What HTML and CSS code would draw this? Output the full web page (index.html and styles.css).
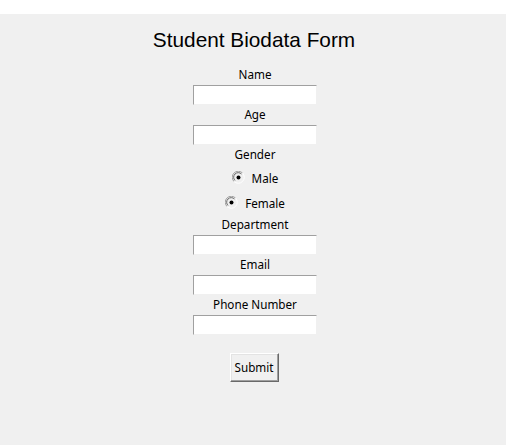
FILE: index.html
```html
<!DOCTYPE html>
<html>
<head>
<meta charset="utf-8">
<link rel="stylesheet" href="styles.css">
</head>
<body>
<div class="topbar"></div>
<div class="form">
  <div class="title">Student Biodata Form</div>
  <div class="label">Name</div>
  <div class="entry"></div>
  <div class="label">Age</div>
  <div class="entry"></div>
  <div class="label">Gender</div>
  <div class="radio male">
    <svg class="ind" width="13" height="13" viewBox="0 0 13 13">
      <path d="M2 10.5 A5.5 5.5 0 0 1 10.5 2" fill="none" stroke="#a0a0a0" stroke-width="1"/>
      <path d="M3 9.5 A4.5 4.5 0 0 1 9.5 3" fill="none" stroke="#696969" stroke-width="1"/>
      <path d="M10.5 2 A5.5 5.5 0 0 1 2 10.5" fill="none" stroke="#ffffff" stroke-width="1"/>
      <circle cx="6.5" cy="6.5" r="2" fill="#000"/>
    </svg>
    <span>Male</span>
  </div>
  <div class="radio female">
    <svg class="ind" width="13" height="13" viewBox="0 0 13 13">
      <path d="M2 10.5 A5.5 5.5 0 0 1 10.5 2" fill="none" stroke="#a0a0a0" stroke-width="1"/>
      <path d="M3 9.5 A4.5 4.5 0 0 1 9.5 3" fill="none" stroke="#696969" stroke-width="1"/>
      <path d="M10.5 2 A5.5 5.5 0 0 1 2 10.5" fill="none" stroke="#ffffff" stroke-width="1"/>
      <circle cx="6.5" cy="6.5" r="2" fill="#000"/>
    </svg>
    <span>Female</span>
  </div>
  <div class="label">Department</div>
  <div class="entry"></div>
  <div class="label">Email</div>
  <div class="entry"></div>
  <div class="label">Phone Number</div>
  <div class="entry"></div>
  <div class="button">Submit</div>
</div>
</body>
</html>
```
FILE: styles.css
```css
html, body {
  margin: 0;
  padding: 0;
}
body {
  background: #f0f0f0;
  width: 506px;
  height: 445px;
  overflow: hidden;
  font-family: "Noto Sans", "Open Sans", sans-serif;
  font-size: 11.7px;
  color: #000;
}
.topbar {
  height: 14px;
  background: #ffffff;
}
.form {
  display: flex;
  flex-direction: column;
  align-items: center;
  padding-left: 2px;
}
.title {
  height: 51px;
  line-height: 51px;
  font-family: "Liberation Sans", Arial, sans-serif;
  font-size: 20.8px;
}
.label {
  box-sizing: border-box;
  height: 20px;
  line-height: 19px;
  padding-left: 2px;
}
.entry {
  box-sizing: border-box;
  width: 124px;
  height: 20px;
  margin-left: 2px;
  background: #fff;
  border-top: 1px solid #a0a0a0;
  border-left: 1px solid #a0a0a0;
  border-right: 1px solid #f0f0f0;
  border-bottom: 1px solid #f0f0f0;
}
.radio {
  height: 25px;
  display: flex;
  align-items: center;
  gap: 7px;
  padding-left: 2px;
}
.radio .ind {
  display: block;
}
.button {
  margin-top: 18px;
  box-sizing: border-box;
  width: 49px;
  height: 29px;
  line-height: 27px;
  text-align: center;
  background: #f0f0f0;
  border-top: 1px solid #ffffff;
  border-left: 1px solid #ffffff;
  border-right: 1px solid #696969;
  border-bottom: 1px solid #696969;
  box-shadow: inset -1px -1px 0 #a0a0a0, inset 1px 1px 0 #e3e3e3;
}
```
